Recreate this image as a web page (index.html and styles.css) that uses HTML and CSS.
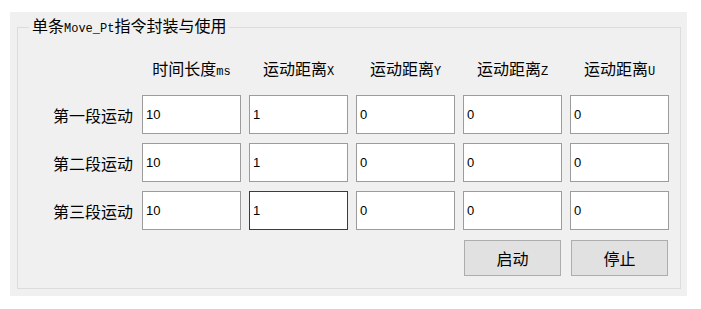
FILE: index.html
```html
<!DOCTYPE html>
<html lang="zh-CN">
<head>
    <meta charset="UTF-8">
    <title>单条Move_Pt指令封装与使用</title>
    <link rel="stylesheet" href="styles.css">
</head>
<body>
    <div class="panel">
        <fieldset class="group">
            <legend>单条<span class="en">Move_Pt</span>指令封装与使用</legend>

            <div class="grid">
                <div></div>
                <div class="head">时间长度<span class="en">ms</span></div>
                <div class="head">运动距离<span class="en">X</span></div>
                <div class="head">运动距离<span class="en">Y</span></div>
                <div class="head">运动距离<span class="en">Z</span></div>
                <div class="head">运动距离<span class="en">U</span></div>

                <div class="label">第一段运动</div>
                <input class="box" type="text" value="10">
                <input class="box" type="text" value="1">
                <input class="box" type="text" value="0">
                <input class="box" type="text" value="0">
                <input class="box" type="text" value="0">

                <div class="label">第二段运动</div>
                <input class="box" type="text" value="10">
                <input class="box" type="text" value="1">
                <input class="box" type="text" value="0">
                <input class="box" type="text" value="0">
                <input class="box" type="text" value="0">

                <div class="label">第三段运动</div>
                <input class="box" type="text" value="10">
                <input class="box hot" type="text" value="1">
                <input class="box" type="text" value="0">
                <input class="box" type="text" value="0">
                <input class="box" type="text" value="0">

                <button class="btn btn-start">启动</button>
                <button class="btn">停止</button>
            </div>
        </fieldset>
    </div>
</body>
</html>
```

FILE: styles.css
```css
body {
    margin: 0;
    background: #ffffff;
    font-family: "Noto Sans CJK SC", "Noto Sans", sans-serif;
    color: #000;
}
.panel {
    width: 677px;
    height: 284px;
    box-sizing: border-box;
    margin: 12px 0 0 10px;
    padding: 3px 6px 8px 7px;
    background: #f0f0f0;
}
.group {
    margin: 0;
    width: 664px;
    box-sizing: border-box;
    border: 1px solid #dcdcdc;
    padding: 21px 0 13px 0;
}
.group legend {
    margin-left: 11px;
    padding: 0 3px;
    font-size: 16px;
    line-height: 20px;
}
.en {
    font-family: "Liberation Mono", monospace;
    font-size: 12px;
}
.grid {
    display: grid;
    grid-template-columns: 116px repeat(5, 99px);
    grid-template-rows: 26px 39px 39px 39px 36px;
    column-gap: 8px;
    row-gap: 9px;
}
.head {
    align-self: start;
    text-align: center;
    font-size: 16px;
    line-height: 16px;
}
.label {
    align-self: center;
    text-align: right;
    padding-right: 1px;
    font-size: 16px;
    line-height: 20px;
}
.box {
    width: 99px;
    height: 39px;
    box-sizing: border-box;
    margin: 0;
    padding: 0 3px;
    border: 1px solid #9c9c9c;
    background: #fff;
    font-family: "Liberation Sans", sans-serif;
    font-size: 13px;
    color: #000;
    outline: none;
}
.box.hot {
    border-color: #3c3c3c;
}
.btn {
    grid-column: 6;
    width: 97px;
    height: 36px;
    margin: 1px 0 0 1px;
    border: 1px solid #adadad;
    background: #e1e1e1;
    font-family: "Noto Sans CJK SC", sans-serif;
    font-size: 16px;
    color: #000;
    padding: 0;
}
.btn-start {
    grid-column: 5;
}
```
